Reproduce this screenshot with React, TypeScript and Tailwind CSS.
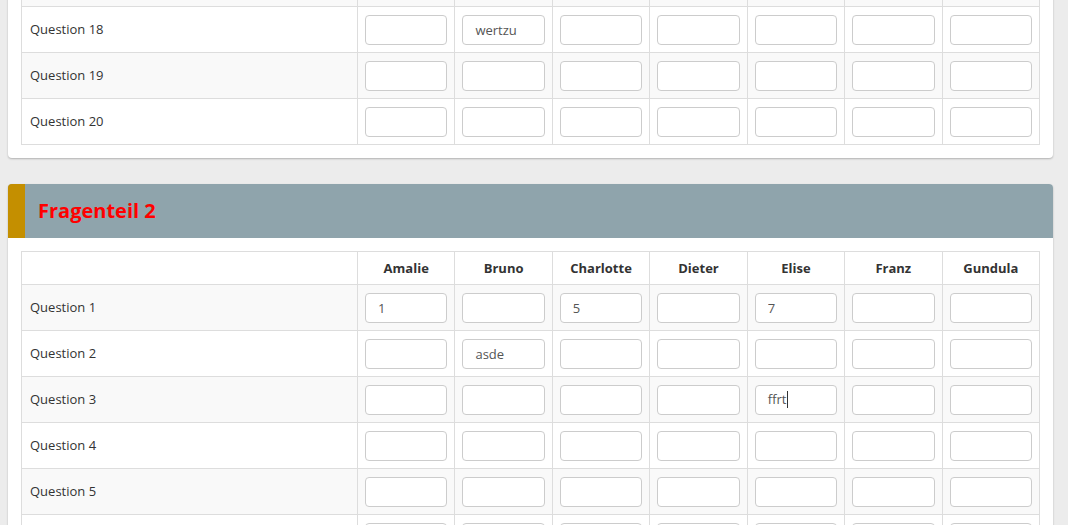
import React from 'react';

const names = ['Amalie', 'Bruno', 'Charlotte', 'Dieter', 'Elise', 'Franz', 'Gundula'];

type Answers = Record<number, Record<number, string>>;

const firstAnswers: Answers = {
  18: { 1: 'wertzu' },
};

const secondAnswers: Answers = {
  1: { 0: '1', 2: '5', 4: '7' },
  2: { 1: 'asde' },
  3: { 4: 'ffrt' },
};

const Field = ({ value, focused }: { value?: string; focused?: boolean }) => {
  if (focused) {
    return (
      <div className="h-[30px] w-full rounded-[4px] border border-[#ccc] bg-white px-3 flex items-center text-[13px] text-[#555]">
        <span>{value}</span>
        <span className="ml-px h-[17px] w-px bg-[#333]" />
      </div>
    );
  }
  return (
    <input
      readOnly
      value={value ?? ''}
      className="block h-[30px] w-full rounded-[4px] border border-[#ccc] bg-white px-3 text-[13px] text-[#555] outline-none"
    />
  );
};

const QuestionRows = ({
  from,
  to,
  answers,
  focus,
}: {
  from: number;
  to: number;
  answers: Answers;
  focus?: [number, number];
}) => {
  const rows = [];
  for (let q = from; q <= to; q++) {
    rows.push(
      <tr key={q} className={q % 2 === 1 ? 'bg-[#f9f9f9]' : 'bg-white'}>
        <td className="h-[46px] border border-[#ddd] px-2 text-[13px] text-[#333]">Question {q}</td>
        {names.map((n, i) => (
          <td key={n} className="h-[46px] border border-[#ddd] px-[7px]">
            <Field
              value={answers[q]?.[i]}
              focused={!!focus && focus[0] === q && focus[1] === i}
            />
          </td>
        ))}
      </tr>
    );
  }
  return <>{rows}</>;
};

const Cols = () => (
  <colgroup>
    <col className="w-[336px]" />
    {names.map((n) => (
      <col key={n} />
    ))}
  </colgroup>
);

export default function App() {
  return (
    <div
      className="min-h-[525px] overflow-hidden bg-[#ececec] pl-2 pr-[15px]"
      style={{ fontFamily: '"Open Sans", "Noto Sans", sans-serif' }}
    >
      {/* first block, scrolled so only its last rows show */}
      <div className="-mt-[40px] rounded-b-[4px] bg-white px-[13px] pb-[13px] shadow-[0_1px_2px_rgba(0,0,0,0.25)]">
        <table className="w-full table-fixed border-collapse">
          <Cols />
          <tbody>
            <QuestionRows from={17} to={20} answers={firstAnswers} />
          </tbody>
        </table>
      </div>

      <div className="mt-[26px] overflow-hidden rounded-t-[4px] bg-white shadow-[0_1px_2px_rgba(0,0,0,0.25)]">
        <div className="flex h-[54px] bg-[#8fa4ac]">
          <div className="w-[17px] bg-[#c48f00]" />
          <h2 className="flex items-center pl-[13px] text-[20px] font-bold text-[#ff0000]">Fragenteil 2</h2>
        </div>
        <div className="px-[13px] pt-[13px] pb-[13px]">
          <table className="w-full table-fixed border-collapse">
            <Cols />
            <thead>
              <tr className="bg-white">
                <th className="h-[33px] border border-[#ddd]" />
                {names.map((n) => (
                  <th key={n} className="h-[33px] border border-[#ddd] pt-px text-center text-[13px] font-bold text-[#333]">
                    {n}
                  </th>
                ))}
              </tr>
            </thead>
            <tbody>
              <QuestionRows from={1} to={6} answers={secondAnswers} focus={[3, 4]} />
            </tbody>
          </table>
        </div>
      </div>
    </div>
  );
}
